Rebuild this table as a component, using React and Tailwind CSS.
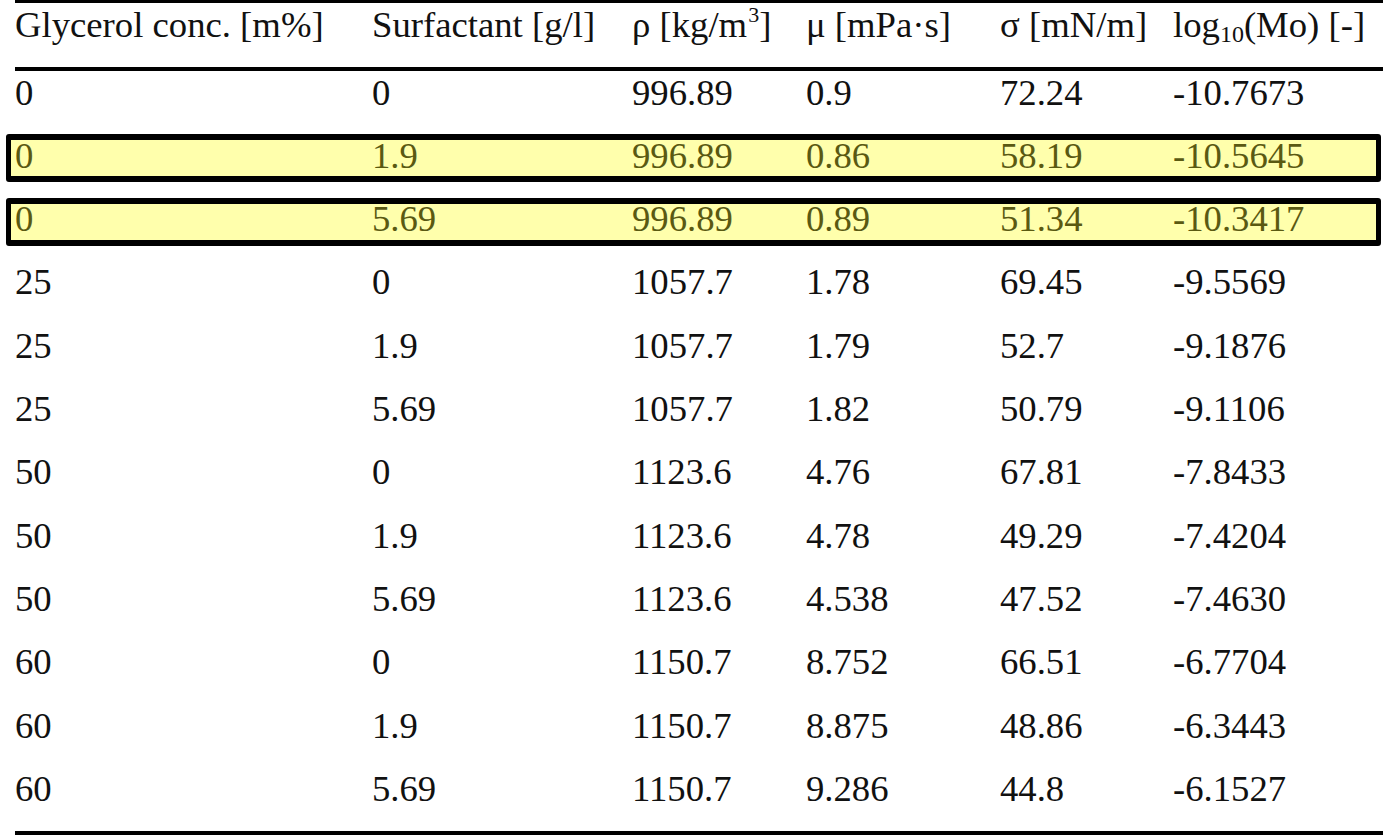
import React from "react";

const rows = [
  ["0", "0", "996.89", "0.9", "72.24", "-10.7673", false],
  ["0", "1.9", "996.89", "0.86", "58.19", "-10.5645", true],
  ["0", "5.69", "996.89", "0.89", "51.34", "-10.3417", true],
  ["25", "0", "1057.7", "1.78", "69.45", "-9.5569", false],
  ["25", "1.9", "1057.7", "1.79", "52.7", "-9.1876", false],
  ["25", "5.69", "1057.7", "1.82", "50.79", "-9.1106", false],
  ["50", "0", "1123.6", "4.76", "67.81", "-7.8433", false],
  ["50", "1.9", "1123.6", "4.78", "49.29", "-7.4204", false],
  ["50", "5.69", "1123.6", "4.538", "47.52", "-7.4630", false],
  ["60", "0", "1150.7", "8.752", "66.51", "-6.7704", false],
  ["60", "1.9", "1150.7", "8.875", "48.86", "-6.3443", false],
  ["60", "5.69", "1150.7", "9.286", "44.8", "-6.1527", false],
];

const cols = "grid grid-cols-[357px_260px_174px_194px_173px_1fr]";

export default function App() {
  return (
    <div
      className="w-[1383px] h-[840px] bg-white overflow-hidden text-[36.7px] leading-[42px] text-[#111]"
      style={{ fontFamily: '"Liberation Serif", "Times New Roman", serif' }}
    >
      <div className="ml-[15px] h-[3px] bg-black" />
      <div className={`${cols} pl-[15px] h-[64px] pt-[0.5px] whitespace-nowrap`}>
        <div>Glycerol conc. [m%]</div>
        <div>Surfactant [g/l]</div>
        <div>
          ρ [kg/m<span className="text-[22px] relative -top-[15px] ml-[1px]">3</span>]
        </div>
        <div>μ [mPa·s]</div>
        <div>σ [mN/m]</div>
        <div>
          log<span className="text-[24px] relative top-[5px]">10</span>(Mo) [-]
        </div>
      </div>
      <div className="ml-[15px] h-[4px] bg-black" />
      <div className="flex flex-col">
        {rows.map((r, i) => (
          <div key={i} className="relative h-[63.33px]">
            {r[6] && (
              <div className="absolute left-[6px] right-[2px] top-0 h-[48px] border-y-[6px] border-x-[5px] border-black rounded-[3px] bg-[#ffffac]" />
            )}
            <div
              className={`${cols} relative pl-[15px] pt-[0.5px] ${
                r[6] ? "text-[#5a5912]" : ""
              }`}
            >
              {r.slice(0, 6).map((c, j) => (
                <div key={j}>{c}</div>
              ))}
            </div>
          </div>
        ))}
      </div>
      <div className="ml-[15px] h-[4px] bg-black" />
    </div>
  );
}
